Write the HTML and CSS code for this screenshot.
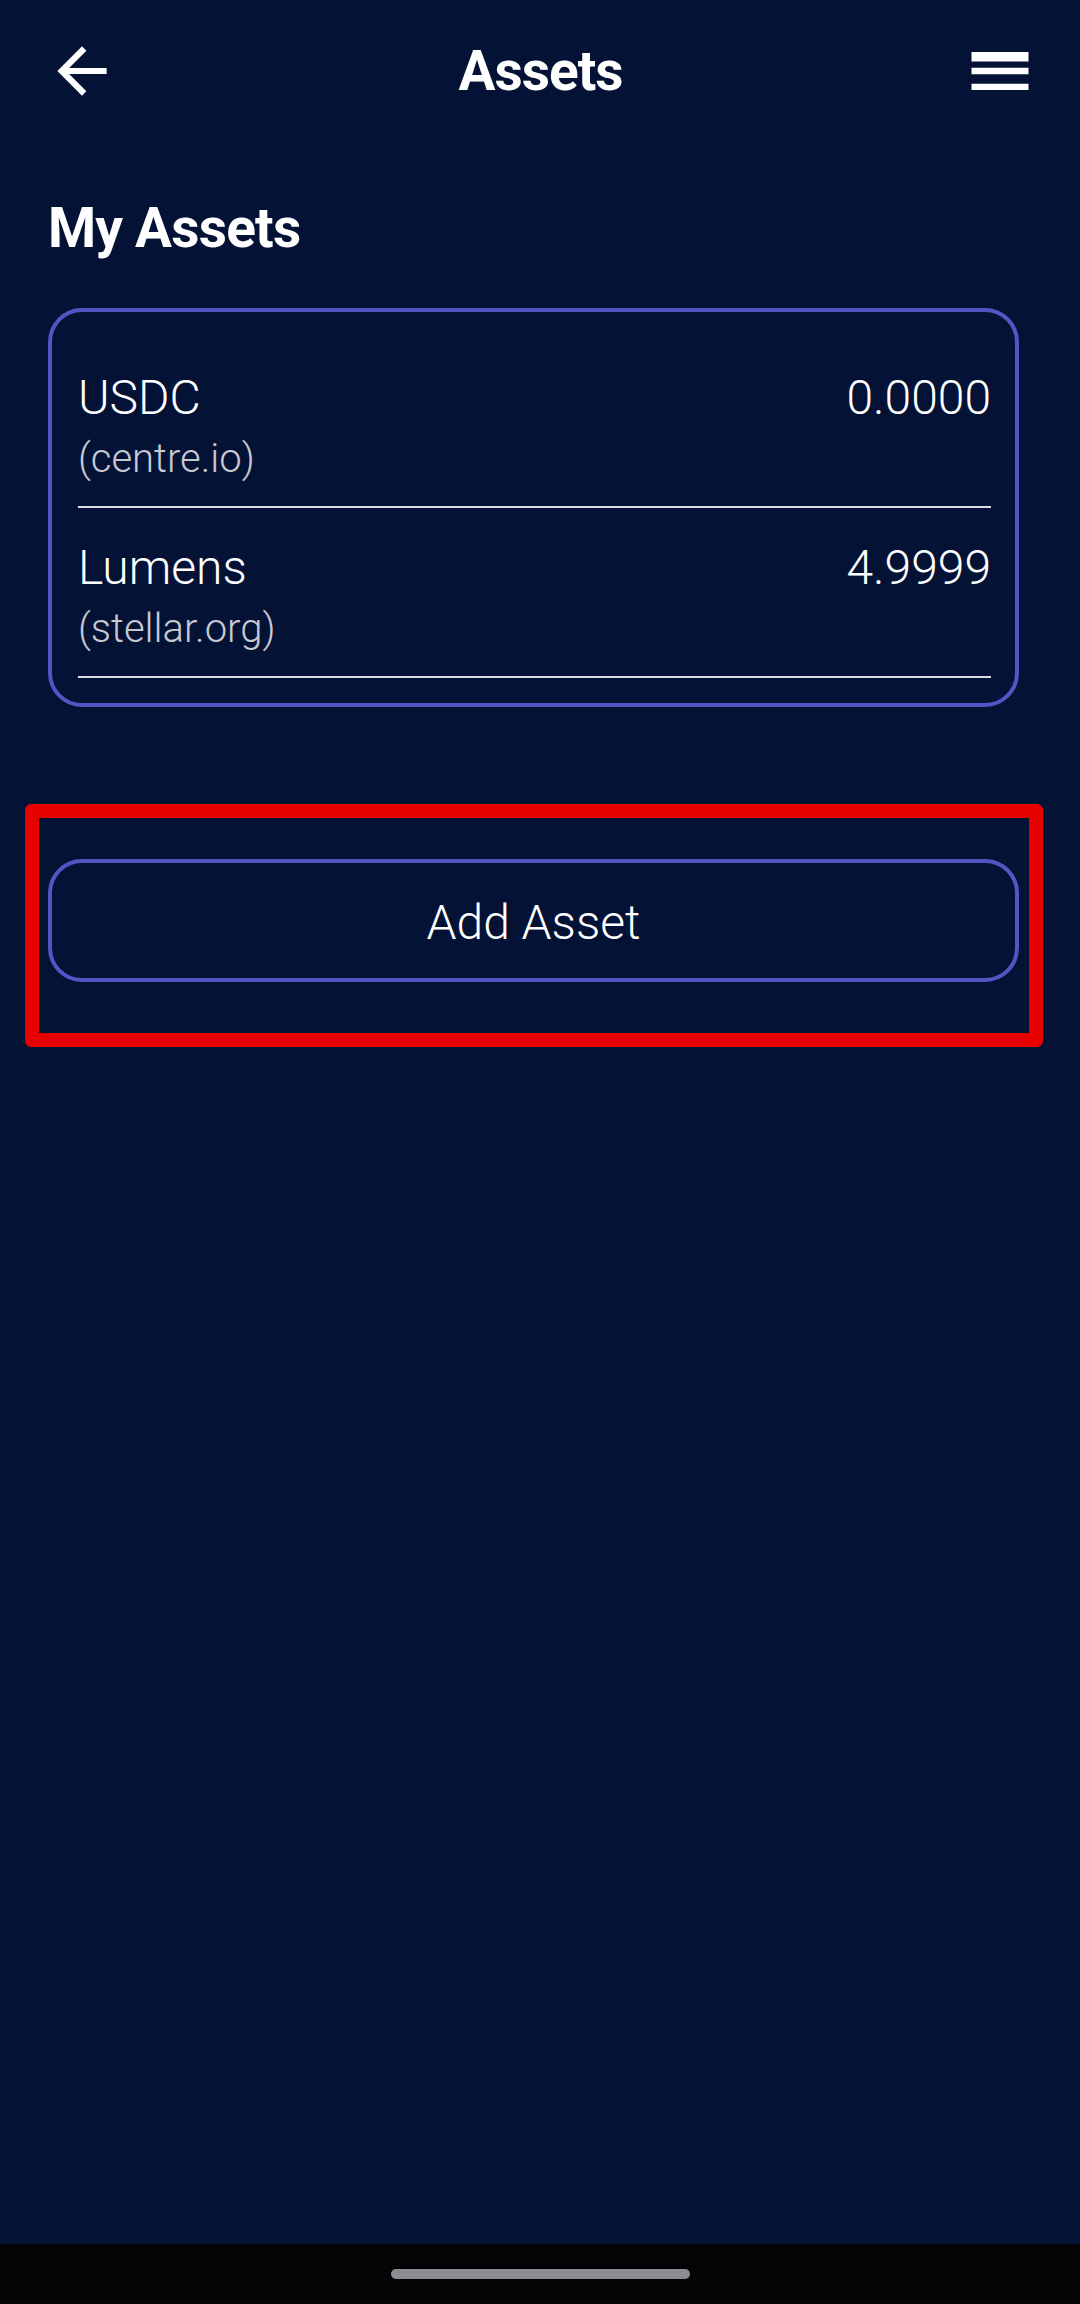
FILE: index.html
```html
<!DOCTYPE html>
<html lang="en">
<head>
    <meta charset="UTF-8">
    <meta name="viewport" content="width=device-width, initial-scale=1.0">
    <title>Assets</title>
    <link rel="stylesheet" href="styles.css">
</head>
<body>

<div class="screen">
    <header class="topbar">
        <button class="icon-btn" aria-label="Back">
            <svg viewBox="0 0 24 24" width="74" height="74">
                <path fill="#fff" d="M20 11H7.83l5.59-5.59L12 4l-8 8 8 8 1.41-1.41L7.83 13H20v-2z"/>
            </svg>
        </button>
        <h1 class="title">Assets</h1>
        <button class="icon-btn" aria-label="Menu">
            <svg viewBox="0 0 24 24" width="76" height="76">
                <path fill="#fff" d="M3 18h18v-2H3v2zm0-5h18v-2H3v2zm0-6v2h18V6H3z"/>
            </svg>
        </button>
    </header>

    <main class="content">
        <h2 class="section-title">My Assets</h2>

        <div class="card">
            <div class="asset-row">
                <div class="asset-line">
                    <span>USDC</span>
                    <span>0.0000</span>
                </div>
                <div class="asset-domain">(centre.io)</div>
            </div>
            <div class="asset-row">
                <div class="asset-line">
                    <span>Lumens</span>
                    <span>4.9999</span>
                </div>
                <div class="asset-domain">(stellar.org)</div>
            </div>
        </div>

        <div class="action">
            <button class="outline-btn">Add Asset</button>
            <!-- highlight drawn over the button -->
            <div class="highlight"></div>
        </div>
    </main>
</div>

<div class="navbar">
    <div class="handle"></div>
</div>

</body>
</html>
```

FILE: styles.css
```css
body {
    margin: 0;
    padding: 0;
    font-family: Roboto, "Noto Sans", sans-serif;
    background-color: #031235;
    color: #fff;
    height: 2304px;
    display: flex;
    flex-direction: column;
    overflow: hidden;
}

.screen {
    flex: 1;
}

.topbar {
    display: flex;
    justify-content: space-between;
    align-items: center;
    height: 76px;
    padding: 33px 42px 0 45px;
}

.icon-btn {
    background: none;
    border: none;
    padding: 0;
    display: flex;
    cursor: pointer;
}

.title {
    margin: 0;
    font-size: 55px;
    font-weight: 700;
    line-height: 64px;
    letter-spacing: -1px;
}

.content {
    padding: 0 61px 0 48px;
}

.section-title {
    margin: 87px 0 48px;
    font-size: 55px;
    font-weight: 700;
    line-height: 64px;
    letter-spacing: -0.8px;
}

.card {
    border: 4px solid #5256c4;
    border-radius: 34px;
    padding: 26px 24px 25px 26px;
}

.asset-row {
    padding: 33px 0 23px;
    border-bottom: 2px solid #dcdde6;
}

.asset-line {
    display: flex;
    justify-content: space-between;
    font-size: 48px;
    font-weight: 300;
    line-height: 54px;
}

.asset-domain {
    margin-top: 10px;
    font-size: 40px;
    font-weight: 300;
    line-height: 48px;
    color: #c9c9d2;
}

.action {
    position: relative;
    margin-top: 152px;
}

.outline-btn {
    display: block;
    width: 100%;
    height: 123px;
    padding: 3px 0 0;
    background: none;
    border: 4px solid #5256c4;
    border-radius: 34px;
    color: #fff;
    font-family: Roboto, "Noto Sans", sans-serif;
    font-size: 48px;
    font-weight: 300;
    cursor: pointer;
}

.highlight {
    position: absolute;
    top: -55px;
    left: -23px;
    right: -24px;
    bottom: -65px;
    border: 14px solid #e60000;
    border-radius: 6px;
    pointer-events: none;
}

.navbar {
    height: 60px;
    background-color: #040406;
    display: flex;
    justify-content: center;
}

.handle {
    margin-top: 25px;
    width: 299px;
    height: 10px;
    border-radius: 5px;
    background-color: #8e8c90;
}
```
